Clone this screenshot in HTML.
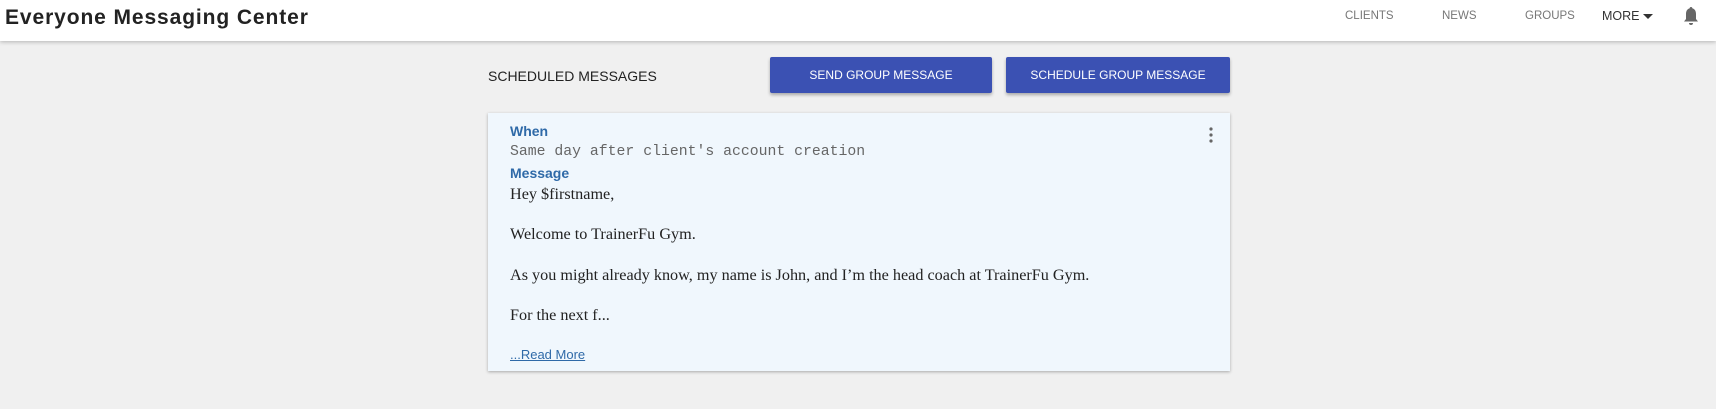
<!DOCTYPE html>
<html><head><meta charset="utf-8"><style>
*{margin:0;padding:0;box-sizing:border-box}
body{width:1716px;height:409px;background:#f0f0f0;font-family:"Liberation Sans",sans-serif;position:relative;overflow:hidden}
.hdr{position:absolute;left:0;top:0;width:1716px;height:41px;background:#fff;box-shadow:0 1px 4px rgba(0,0,0,.25)}
.title{position:absolute;left:5px;top:6px;font-size:21px;font-weight:bold;color:#222;letter-spacing:0.9px}
.nav{position:absolute;top:10px;font-size:11.5px;color:#777}
.more{color:#333;font-size:12.5px;top:9px}
.abs{position:absolute}
.btn{position:absolute;top:57px;height:36px;background:#3b51b3;color:#fff;font-size:12px;text-align:center;line-height:36px;border-radius:2px;box-shadow:0 2px 3px rgba(0,0,0,.3)}
.card{position:absolute;left:488px;top:113px;width:742px;height:258px;background:#f0f7fd;box-shadow:0 1px 3px rgba(0,0,0,.3)}
.lbl{position:absolute;left:22px;color:#2f6aa8;font-weight:bold;font-size:14px}
.serif{position:absolute;left:22px;font-family:"Liberation Serif",serif;font-size:16.2px;color:#222}
</style></head><body>
<div class="hdr">
<div class="title">Everyone Messaging Center</div>
<div class="nav" style="left:1345px">CLIENTS</div>
<div class="nav" style="left:1442px">NEWS</div>
<div class="nav" style="left:1525px">GROUPS</div>
<div class="nav more" style="left:1602px">MORE</div>
<svg class="abs" style="left:1643px;top:14px" width="11" height="6"><path d="M0 0H10L5 5Z" fill="#333"/></svg>
<svg class="abs" style="left:1682px;top:6px" width="18" height="20" viewBox="0 0 18 20"><path d="M9 1c1 0 1.3.7 1.3 1.3C13 3 14 5.5 14 8v5l2 2.5H2L4 13V8c0-2.5 1-5 3.7-5.7C7.7 1.7 8 1 9 1zM7 17h4a2 2 0 0 1-4 0z" fill="#666"/></svg>
</div>
<div class="abs" style="left:488px;top:68px;font-size:14px;color:#222">SCHEDULED MESSAGES</div>
<div class="btn" style="left:770px;width:222px">SEND GROUP MESSAGE</div>
<div class="btn" style="left:1006px;width:224px">SCHEDULE GROUP MESSAGE</div>
<div class="card">
<div class="lbl" style="top:10px">When</div>
<div class="abs" style="left:22px;top:31px;font-family:'Liberation Mono',monospace;font-size:14.8px;color:#666">Same day after client's account creation</div>
<div class="lbl" style="top:52px">Message</div>
<div class="serif" style="top:72px">Hey $firstname,</div>
<div class="serif" style="top:112px">Welcome to TrainerFu Gym.</div>
<div class="serif" style="top:153px">As you might already know, my name is John, and I’m the head coach at TrainerFu Gym.</div>
<div class="serif" style="top:193px">For the next f...</div>
<div class="abs" style="left:22px;top:234px;font-size:13px;color:#2f6aa8;text-decoration:underline">...Read More</div>
<svg class="abs" style="left:721px;top:14px" width="4" height="16"><circle cx="2" cy="2" r="1.6" fill="#666"/><circle cx="2" cy="8" r="1.6" fill="#666"/><circle cx="2" cy="14" r="1.6" fill="#666"/></svg>
</div>
</body></html>
